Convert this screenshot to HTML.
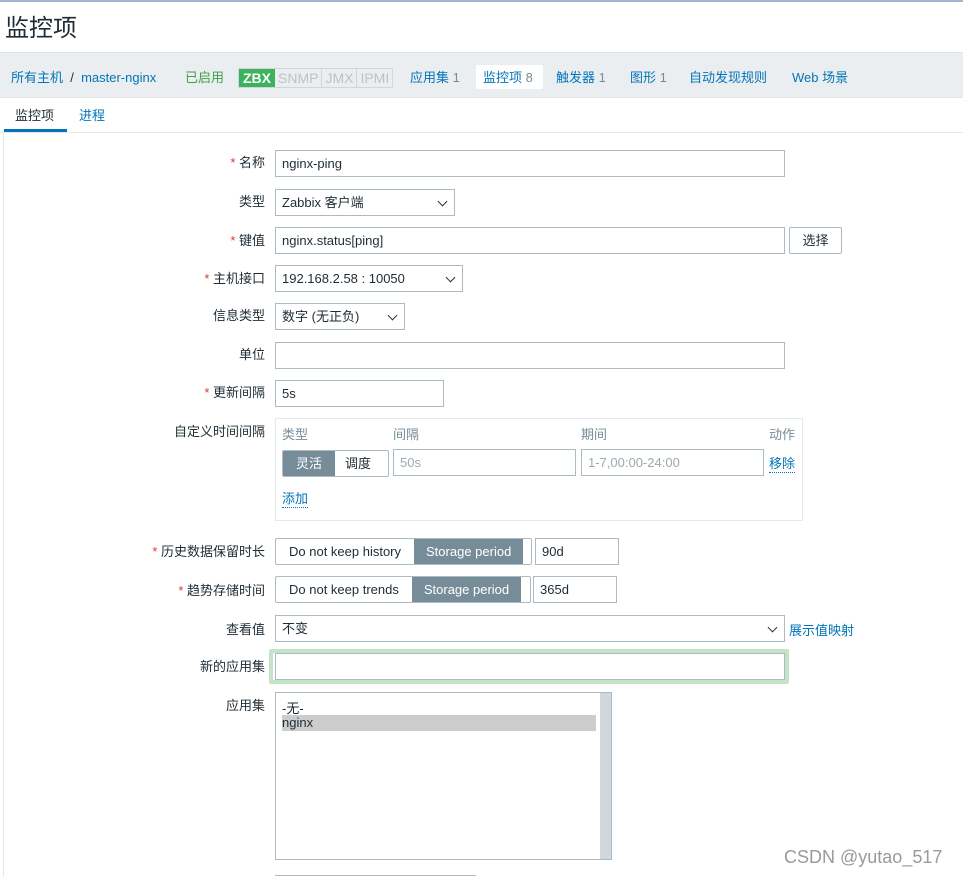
<!DOCTYPE html>
<html><head><meta charset="utf-8"><style>
*{box-sizing:border-box;margin:0;padding:0}
body{width:963px;height:877px;overflow:hidden;background:#fff;font-family:"Liberation Sans","Noto Sans CJK SC",sans-serif;font-size:13px;color:#1f2c33;position:relative}
.a{position:absolute;white-space:nowrap}
.lnk{color:#0275b8}
.lbl{position:absolute;right:698px;text-align:right;white-space:nowrap}
.req::before{content:"* ";color:#e33734}
.in{position:absolute;border:1px solid #acbbc2;background:#fff;height:27px;padding:0 6px;line-height:25px;white-space:nowrap}
.sel::after{content:"";position:absolute;right:8px;top:8px;width:6px;height:6px;border-right:1.3px solid #333;border-bottom:1.3px solid #333;transform:rotate(45deg)}
.seg{position:absolute;border:1px solid #acbbc2;height:27px;display:flex;border-radius:2px;overflow:hidden}
.seg span{line-height:25px;padding:0 12px}
.seg .on{background:#768d99;color:#fff}
</style></head><body>
<div class="a" style="left:0;top:0;width:963px;height:2px;background:#9fb4cf"></div>
<div class="a" style="left:5px;top:8px;font-size:24px;color:#1f2c33">监控项</div>
<div class="a" style="left:0;top:52px;width:963px;height:46px;background:#ebeef0;border-top:1px solid #dfe4e7;border-bottom:1px solid #dfe4e7"></div>
<div class="a lnk" style="left:11px;top:67px">所有主机 <span style="color:#1f2c33">&nbsp;/&nbsp;</span> master-nginx</div>
<div class="a" style="left:185px;top:67px;color:#429e47">已启用</div>
<div class="a" style="left:238px;top:68px;height:20px;display:flex;border:1px solid #d0d6d9;font-size:14px;line-height:18px">
<span style="background:#3db25c;color:#fff;padding:0 4px;font-weight:bold">ZBX</span><span style="color:#bbc3c8;padding:0 3px;border-right:1px solid #d0d6d9">SNMP</span><span style="color:#bbc3c8;padding:0 3px;border-right:1px solid #d0d6d9">JMX</span><span style="color:#bbc3c8;padding:0 3px">IPMI</span></div>
<div class="a lnk" style="left:410px;top:67px">应用集 <span style="color:#768d99">1</span></div>
<div class="a" style="left:476px;top:65px;width:67px;height:24px;background:#fff;border-radius:2px"></div>
<div class="a lnk" style="left:483px;top:67px">监控项 <span style="color:#768d99">8</span></div>
<div class="a lnk" style="left:556px;top:67px">触发器 <span style="color:#768d99">1</span></div>
<div class="a lnk" style="left:630px;top:67px">图形 <span style="color:#768d99">1</span></div>
<div class="a lnk" style="left:689px;top:67px">自动发现规则</div>
<div class="a lnk" style="left:792px;top:67px">Web 场景</div>
<div class="a" style="left:15px;top:105px">监控项</div>
<div class="a lnk" style="left:79px;top:105px">进程</div>
<div class="a" style="left:4px;top:129px;width:63px;height:3px;background:#0275b8"></div>
<div class="a" style="left:0;top:132px;width:963px;height:1px;background:#e6e9eb"></div>
<div class="a" style="left:3px;top:133px;width:1px;height:744px;background:#e6e9eb"></div>

<div class="lbl req" style="top:152px">名称</div><div class="in" style="left:275px;top:150px;width:510px">nginx-ping</div>
<div class="lbl" style="top:191px">类型</div><div class="in sel" style="left:275px;top:189px;width:180px">Zabbix 客户端</div>
<div class="lbl req" style="top:230px">键值</div><div class="in" style="left:275px;top:227px;width:510px">nginx.status[ping]</div>
<div class="in" style="left:789px;top:227px;width:53px;text-align:center;border-radius:2px">选择</div>
<div class="lbl req" style="top:268px">主机接口</div><div class="in sel" style="left:275px;top:265px;width:188px">192.168.2.58 : 10050</div>
<div class="lbl" style="top:305px">信息类型</div><div class="in sel" style="left:275px;top:303px;width:130px">数字 (无正负)</div>
<div class="lbl" style="top:344px">单位</div><div class="in" style="left:275px;top:342px;width:510px"></div>
<div class="lbl req" style="top:382px">更新间隔</div><div class="in" style="left:275px;top:380px;width:169px">5s</div>
<div class="lbl" style="top:421px">自定义时间间隔</div>
<div class="a" style="left:275px;top:418px;width:528px;height:103px;border:1px solid #e6e9eb"></div>
<div class="a" style="left:282px;top:424px;color:#768d99">类型</div>
<div class="a" style="left:393px;top:424px;color:#768d99">间隔</div>
<div class="a" style="left:581px;top:424px;color:#768d99">期间</div>
<div class="a" style="left:769px;top:424px;color:#768d99">动作</div>
<div class="seg" style="left:282px;top:450px;width:107px"><span class="on" style="padding:0 13px">灵活</span><span style="padding:0 10px">调度</span></div>
<div class="in" style="left:393px;top:449px;width:183px;color:#a0a9ae">50s</div>
<div class="in" style="left:581px;top:449px;width:183px;color:#a0a9ae">1-7,00:00-24:00</div>
<div class="a lnk" style="left:769px;top:453px;border-bottom:1px dotted #0275b8">移除</div>
<div class="a lnk" style="left:282px;top:488px;border-bottom:1px dotted #0275b8">添加</div>

<div class="lbl req" style="top:541px">历史数据保留时长</div>
<div class="seg" style="left:275px;top:538px;width:257px"><span style="padding:0 13px">Do not keep history</span><span class="on">Storage period</span></div>
<div class="in" style="left:535px;top:538px;width:84px">90d</div>
<div class="lbl req" style="top:580px">趋势存储时间</div>
<div class="seg" style="left:275px;top:576px;width:256px"><span style="padding:0 13px">Do not keep trends</span><span class="on">Storage period</span></div>
<div class="in" style="left:533px;top:576px;width:84px">365d</div>
<div class="lbl" style="top:619px">查看值</div><div class="in sel" style="left:275px;top:615px;width:510px">不变</div>
<div class="a lnk" style="left:789px;top:620px">展示值映射</div>
<div class="lbl" style="top:656px">新的应用集</div>
<div class="a" style="left:269px;top:649px;width:520px;height:35px;border:4px solid #c5e3c9;border-radius:2px"></div>
<div class="in" style="left:275px;top:653px;width:510px"></div>
<div class="lbl" style="top:695px">应用集</div>
<div class="a" style="left:275px;top:692px;width:337px;height:168px;border:1px solid #acbbc2"></div>
<div class="a" style="left:600px;top:693px;width:11px;height:166px;background:#d1d8dd"></div>
<div class="a" style="left:282px;top:698px">-无-</div>
<div class="a" style="left:282px;top:715px;width:314px;height:16px;background:#cccccc;line-height:15px">nginx</div>
<div class="a" style="left:275px;top:875px;width:201px;height:2px;border-top:1px solid #acbbc2"></div>
<div class="a" style="left:784px;top:847px;font-size:18px;color:#9a9a9a">CSDN @yutao_517</div>
</body></html>
